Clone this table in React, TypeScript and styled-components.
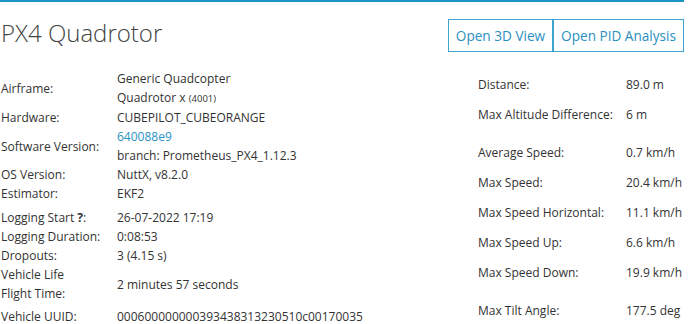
import React from 'react'
import styled, { createGlobalStyle } from 'styled-components'

const GlobalStyle = createGlobalStyle`
  body {
    margin: 0;
    background: #fff;
    font-family: 'Open Sans', 'Liberation Sans', sans-serif;
    color: #333;
  }
`

const Page = styled.div`
  width: 684px;
  border-top: 2px solid #1b95c6;
  padding-left: 1px;
  box-sizing: border-box;
`

const Header = styled.div`
  display: flex;
  justify-content: space-between;
  align-items: flex-start;
  padding-top: 17px;
  margin-bottom: 17px;
`

const Title = styled.h1`
  margin: 0;
  font-size: 24px;
  line-height: 27px;
  font-weight: 300;
  color: #444;
`

const ButtonGroup = styled.div`
  display: flex;
`

const Button = styled.button`
  height: 33px;
  padding: 0 7px;
  background: #fff;
  border: 1px solid #3ba4cf;
  color: #2a8fc1;
  font-family: 'Open Sans', 'Liberation Sans', sans-serif;
  font-size: 13.6px;
  cursor: pointer;

  & + & {
    border-left-width: 2px;
    margin-left: -1px;
  }
`

const Body = styled.div`
  display: grid;
  grid-template-columns: 477px auto;
  font-size: 12px;
`

const Table = styled.div`
  display: flex;
  flex-direction: column;
`

const Group = styled.div<{ $gap?: number }>`
  margin-top: ${p => p.$gap || 0}px;
`

const InfoRow = styled.div`
  display: grid;
  grid-template-columns: 116px auto;
  align-items: center;
  line-height: 19px;
  white-space: nowrap;
`

const StatRow = styled.div`
  display: grid;
  grid-template-columns: 148px auto;
  align-items: center;
  height: 30px;
  line-height: 19px;
  white-space: nowrap;
`

const Link = styled.a`
  color: #2a93c5;
  text-decoration: none;
`

const Small = styled.span`
  font-size: 9.5px;
`

const Help = styled.b`
  font-weight: 700;
`

type Item = [React.ReactNode, React.ReactNode]

const info: Item[][] = [
  [
    ['Airframe:', <>Generic Quadcopter<br />Quadrotor x <Small>(4001)</Small></>],
    ['Hardware:', 'CUBEPILOT_CUBEORANGE'],
    ['Software Version:', <><Link href="#">640088e9</Link><br />branch: Prometheus_PX4_1.12.3</>],
    ['OS Version:', 'NuttX, v8.2.0'],
    ['Estimator:', 'EKF2'],
  ],
  [
    [<>Logging Start <Help>?</Help>:</>, '26-07-2022 17:19'],
    ['Logging Duration:', '0:08:53'],
    ['Dropouts:', '3 (4.15 s)'],
    [<>Vehicle Life<br />Flight Time:</>, '2 minutes 57 seconds'],
  ],
  [
    ['Vehicle UUID:', '000600000000393438313230510c00170035'],
  ],
]

const stats: Item[][] = [
  [
    ['Distance:', '89.0 m'],
    ['Max Altitude Difference:', '6 m'],
  ],
  [
    ['Average Speed:', '0.7 km/h'],
    ['Max Speed:', '20.4 km/h'],
    ['Max Speed Horizontal:', '11.1 km/h'],
    ['Max Speed Up:', '6.6 km/h'],
    ['Max Speed Down:', '19.9 km/h'],
  ],
  [
    ['Max Tilt Angle:', '177.5 deg'],
  ],
]

const infoGaps = [0, 5, 4]
const statGaps = [0, 8, 8]

export default function App() {
  return (
    <>
      <GlobalStyle />
      <Page>
        <Header>
          <Title>PX4 Quadrotor</Title>
          <ButtonGroup>
            <Button>Open 3D View</Button>
            <Button>Open PID Analysis</Button>
          </ButtonGroup>
        </Header>
        <Body>
          <Table>
            {info.map((group, i) => (
              <Group key={i} $gap={infoGaps[i]}>
                {group.map(([k, v], j) => (
                  <InfoRow key={j}>
                    <div>{k}</div>
                    <div>{v}</div>
                  </InfoRow>
                ))}
              </Group>
            ))}
          </Table>
          <Table>
            {stats.map((group, i) => (
              <Group key={i} $gap={statGaps[i]}>
                {group.map(([k, v], j) => (
                  <StatRow key={j}>
                    <div>{k}</div>
                    <div>{v}</div>
                  </StatRow>
                ))}
              </Group>
            ))}
          </Table>
        </Body>
      </Page>
    </>
  )
}
